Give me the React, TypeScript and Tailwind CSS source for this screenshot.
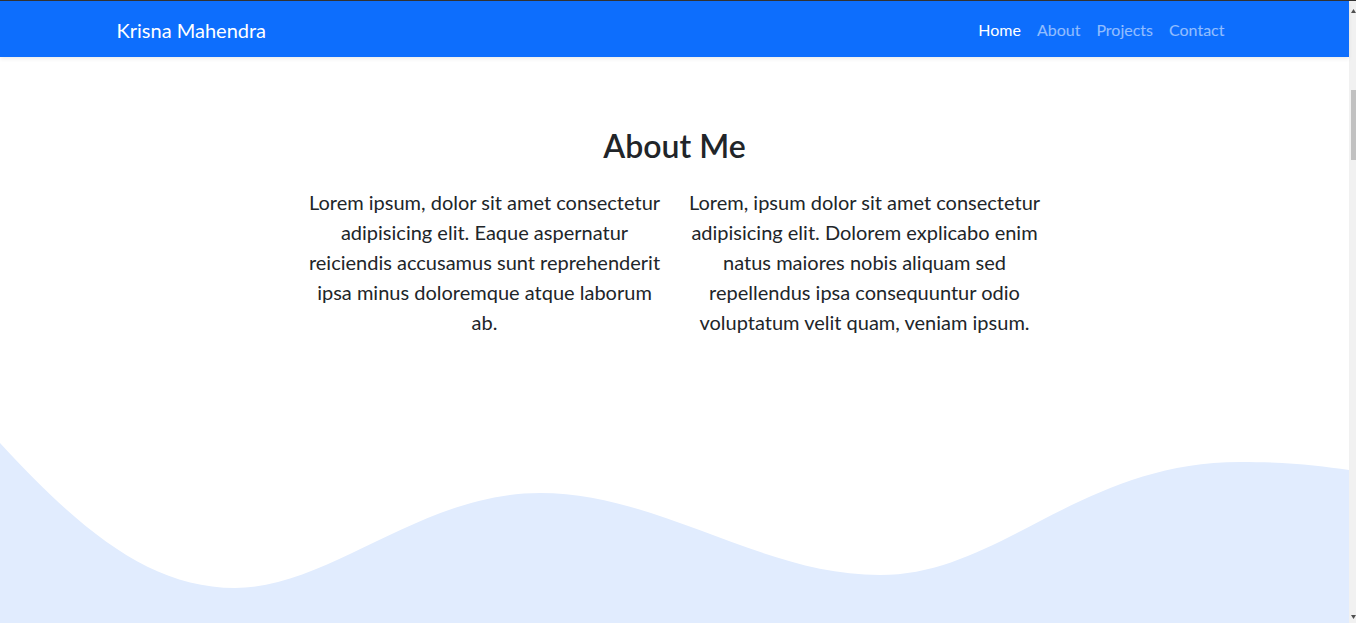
export default function App() {
  const font = { fontFamily: 'Lato, "Noto Sans", sans-serif' };
  return (
    <div className="h-[623px] overflow-hidden flex flex-col bg-white text-[#212529]" style={font}>
      {/* window top edge */}
      <div className="h-px bg-[#333333]" />
      <div className="flex flex-1 min-h-0">
        <div className="flex-1 flex flex-col min-w-0">
          {/* Navbar */}
          <nav className="h-[56px] bg-[#0d6efd] shadow-[0_2px_4px_rgba(0,0,0,0.08)] relative z-10">
            <div className="max-w-[1140px] mx-auto px-3 h-full flex items-center justify-between pt-[2px]">
              <span className="text-[20px] text-white leading-[30px]">Krisna Mahendra</span>
              <ul className="flex items-center text-[16px] leading-6">
                <li className="px-2 text-white">Home</li>
                <li className="px-2 text-white/55">About</li>
                <li className="px-2 text-white/55">Projects</li>
                <li className="px-2 text-white/55">Contact</li>
              </ul>
            </div>
          </nav>

          {/* About */}
          <section className="pt-[70px]">
            <h2 className="text-[32px] font-semibold leading-[38px] text-center mb-[22px]">About Me</h2>
            <div className="max-w-[1140px] mx-auto flex justify-center">
              <p className="w-[380px] px-3 text-[20px] leading-[30px] text-center">
                Lorem ipsum, dolor sit amet consectetur
                <br />
                adipisicing elit. Eaque aspernatur
                <br />
                reiciendis accusamus sunt reprehenderit
                <br />
                ipsa minus doloremque atque laborum
                <br />
                ab.
              </p>
              <p className="w-[380px] px-3 text-[20px] leading-[30px] text-center">
                Lorem, ipsum dolor sit amet consectetur
                <br />
                adipisicing elit. Dolorem explicabo enim
                <br />
                natus maiores nobis aliquam sed
                <br />
                repellendus ipsa consequuntur odio
                <br />
                voluptatum velit quam, veniam ipsum.
              </p>
            </div>
          </section>

          {/* Wave */}
          <div className="mt-auto h-[183px]">
            <svg viewBox="0 0 1349 183" preserveAspectRatio="none" className="w-full h-full block">
              <path
                fill="#e1ecfe"
                d="M0,3 C80,90 150,148 235,148 C330,148 420,53 540,53 C660,53 760,135 880,135 C1000,135 1080,22 1240,22 C1290,22 1320,26 1349,30 L1349,183 L0,183 Z"
              />
            </svg>
          </div>
        </div>

        {/* Scrollbar */}
        <div className="w-[7px] bg-[#f1f1f1] flex flex-col">
          <div className="h-[89px] flex justify-end pt-[8px]">
            <svg width="5" height="4" viewBox="0 0 5 4">
              <path d="M0,4 L2.5,0 L5,4 Z" fill="#505050" />
            </svg>
          </div>
          <div className="h-[70px] ml-[2px] bg-[#c1c1c1]" />
          <div className="flex-1 flex items-end justify-end pb-[4px]">
            <svg width="5" height="4" viewBox="0 0 5 4">
              <path d="M0,0 L5,0 L2.5,4 Z" fill="#505050" />
            </svg>
          </div>
        </div>
      </div>
    </div>
  );
}
